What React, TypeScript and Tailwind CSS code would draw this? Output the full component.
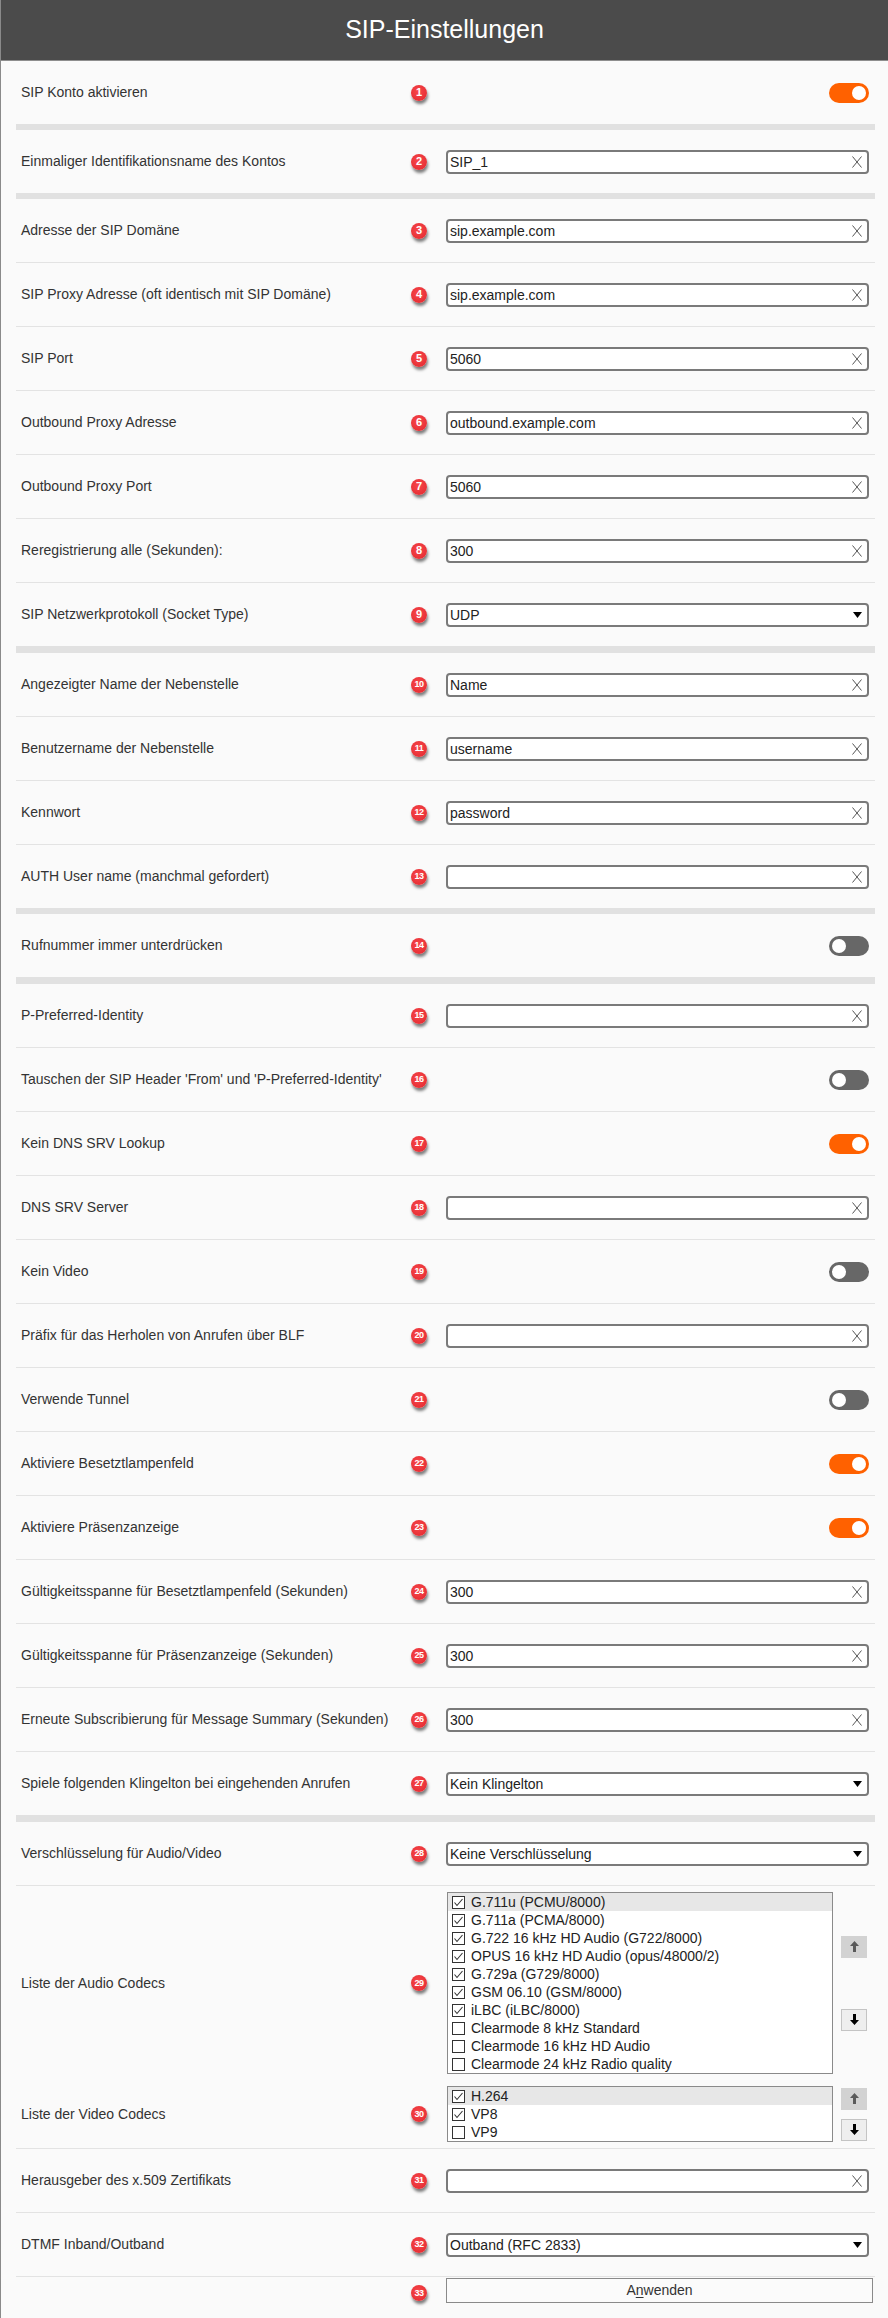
import React from "react";

type Kind = "toggle" | "input" | "select";
type SepKind = "thick" | "thick7" | "thin";
type Row = { n: number; label: string; kind: Kind; value?: string; on?: boolean; sep: SepKind };

const rows: Row[] = [
  { n: 1, label: "SIP Konto aktivieren", kind: "toggle", on: true, sep: "thick" },
  { n: 2, label: "Einmaliger Identifikationsname des Kontos", kind: "input", value: "SIP_1", sep: "thick" },
  { n: 3, label: "Adresse der SIP Domäne", kind: "input", value: "sip.example.com", sep: "thin" },
  { n: 4, label: "SIP Proxy Adresse (oft identisch mit SIP Domäne)", kind: "input", value: "sip.example.com", sep: "thin" },
  { n: 5, label: "SIP Port", kind: "input", value: "5060", sep: "thin" },
  { n: 6, label: "Outbound Proxy Adresse", kind: "input", value: "outbound.example.com", sep: "thin" },
  { n: 7, label: "Outbound Proxy Port", kind: "input", value: "5060", sep: "thin" },
  { n: 8, label: "Reregistrierung alle (Sekunden):", kind: "input", value: "300", sep: "thin" },
  { n: 9, label: "SIP Netzwerkprotokoll (Socket Type)", kind: "select", value: "UDP", sep: "thick7" },
  { n: 10, label: "Angezeigter Name der Nebenstelle", kind: "input", value: "Name", sep: "thin" },
  { n: 11, label: "Benutzername der Nebenstelle", kind: "input", value: "username", sep: "thin" },
  { n: 12, label: "Kennwort", kind: "input", value: "password", sep: "thin" },
  { n: 13, label: "AUTH User name (manchmal gefordert)", kind: "input", value: "", sep: "thick" },
  { n: 14, label: "Rufnummer immer unterdrücken", kind: "toggle", on: false, sep: "thick7" },
  { n: 15, label: "P-Preferred-Identity", kind: "input", value: "", sep: "thin" },
  { n: 16, label: "Tauschen der SIP Header 'From' und 'P-Preferred-Identity'", kind: "toggle", on: false, sep: "thin" },
  { n: 17, label: "Kein DNS SRV Lookup", kind: "toggle", on: true, sep: "thin" },
  { n: 18, label: "DNS SRV Server", kind: "input", value: "", sep: "thin" },
  { n: 19, label: "Kein Video", kind: "toggle", on: false, sep: "thin" },
  { n: 20, label: "Präfix für das Herholen von Anrufen über BLF", kind: "input", value: "", sep: "thin" },
  { n: 21, label: "Verwende Tunnel", kind: "toggle", on: false, sep: "thin" },
  { n: 22, label: "Aktiviere Besetztlampenfeld", kind: "toggle", on: true, sep: "thin" },
  { n: 23, label: "Aktiviere Präsenzanzeige", kind: "toggle", on: true, sep: "thin" },
  { n: 24, label: "Gültigkeitsspanne für Besetztlampenfeld (Sekunden)", kind: "input", value: "300", sep: "thin" },
  { n: 25, label: "Gültigkeitsspanne für Präsenzanzeige (Sekunden)", kind: "input", value: "300", sep: "thin" },
  { n: 26, label: "Erneute Subscribierung für Message Summary (Sekunden)", kind: "input", value: "300", sep: "thin" },
  { n: 27, label: "Spiele folgenden Klingelton bei eingehenden Anrufen", kind: "select", value: "Kein Klingelton", sep: "thick7" },
  { n: 28, label: "Verschlüsselung für Audio/Video", kind: "select", value: "Keine Verschlüsselung", sep: "thin" },
];

const audio: [string, boolean][] = [
  ["G.711u (PCMU/8000)", true],
  ["G.711a (PCMA/8000)", true],
  ["G.722 16 kHz HD Audio (G722/8000)", true],
  ["OPUS 16 kHz HD Audio (opus/48000/2)", true],
  ["G.729a (G729/8000)", true],
  ["GSM 06.10 (GSM/8000)", true],
  ["iLBC (iLBC/8000)", true],
  ["Clearmode 8 kHz Standard", false],
  ["Clearmode 16 kHz HD Audio", false],
  ["Clearmode 24 kHz Radio quality", false],
];
const video: [string, boolean][] = [
  ["H.264", true],
  ["VP8", true],
  ["VP9", false],
];

function Badge({ n }: { n: number }) {
  return (
    <span
      className={
        "relative z-10 flex h-[16px] w-[16px] shrink-0 items-center justify-center rounded-full bg-[radial-gradient(circle_at_45%_40%,#f8474b,#e0272d)] font-bold leading-none text-white shadow-[1px_3px_3px_rgba(0,0,0,0.5)] " +
        (n < 10 ? "text-[11px]" : "text-[9px] tracking-[-0.5px]")
      }
    >
      {n}
    </span>
  );
}

function Toggle({ on }: { on?: boolean }) {
  return (
    <div className="flex w-[423px] justify-end">
      {on ? (
        <div className="flex h-[20px] w-[40px] items-center justify-end rounded-full bg-[#ff6100] pr-[3px]">
          <div className="h-[14px] w-[14px] rounded-full bg-white" />
        </div>
      ) : (
        <div className="flex h-[20px] w-[40px] items-center justify-start rounded-full bg-[#676767] pl-[3px]">
          <div className="h-[14px] w-[14px] rounded-full bg-white" />
        </div>
      )}
    </div>
  );
}

function XIcon() {
  return (
    <svg width="10" height="12" viewBox="0 0 10 12" className="shrink-0">
      <path d="M0.5 0.5 L9.5 11.5 M9.5 0.5 L0.5 11.5" stroke="#555" strokeWidth="1" fill="none" />
    </svg>
  );
}

function Input({ value }: { value?: string }) {
  return (
    <div className="flex h-[24px] w-[423px] items-center justify-between rounded-[4px] border-2 border-[#7a7a7a] bg-white pl-[2px] pr-[5px]">
      <span className="text-[14px] leading-none text-[#222]">{value}</span>
      <XIcon />
    </div>
  );
}

function Select({ value }: { value?: string }) {
  return (
    <div className="flex h-[24px] w-[423px] items-center justify-between rounded-[4px] border-2 border-[#7a7a7a] bg-white pl-[2px] pr-[5px]">
      <span className="text-[14px] leading-none text-[#222]">{value}</span>
      <svg width="9" height="6" viewBox="0 0 9 6" className="shrink-0">
        <path d="M0 0 H9 L4.5 6Z" fill="#000" />
      </svg>
    </div>
  );
}

function Sep({ kind }: { kind: SepKind }) {
  if (kind === "thick") return <div className="ml-[15px] mr-[13px] h-[6px] bg-[#e1e1e1]" />;
  if (kind === "thick7") return <div className="ml-[15px] mr-[13px] h-[7px] bg-[#e1e1e1]" />;
  return <div className="ml-[15px] mr-[13px] h-[1px] bg-[#e3e3e3]" />;
}

function Label({ text }: { text: string }) {
  return (
    <div className="w-[410px] shrink-0 whitespace-nowrap pl-[20px] text-[14px] text-[#333]">{text}</div>
  );
}

function CheckBox({ checked }: { checked: boolean }) {
  return (
    <svg width="13" height="13" viewBox="0 0 13 13" className="shrink-0">
      <rect x="0.5" y="0.5" width="12" height="12" fill="#fff" stroke="#333" strokeWidth="1" />
      {checked && <path d="M2.5 6.5 L5 9.5 L10.5 3" stroke="#333" strokeWidth="1.1" fill="none" />}
    </svg>
  );
}

function Arrow({ up, disabled }: { up: boolean; disabled?: boolean }) {
  return (
    <div
      className={
        "flex h-[22px] w-[26px] items-center justify-center " +
        (disabled ? "bg-[#d2d2d2]" : "border border-[#c4c4c4] bg-[#eeeeee]")
      }
    >
      <svg width="9" height="11" viewBox="0 0 9 11" className={up ? "" : "rotate-180"}>
        <path d="M4.5 0 L9 5 H6 V11 H3 V5 H0Z" fill={disabled ? "#5a5a5a" : "#000"} />
      </svg>
    </div>
  );
}

function CodecList({ items, gap }: { items: [string, boolean][]; gap: string }) {
  return (
    <div className="ml-[1px] flex items-center gap-[8px]">
      <div className="w-[386px] border border-[#8a8a8a] bg-white">
        {items.map(([name, checked], i) => (
          <div
            key={name}
            className={"flex h-[18px] items-center gap-[6px] pl-[4px] " + (i === 0 ? "bg-[#e7e7e7]" : "")}
          >
            <CheckBox checked={checked} />
            <span className="text-[14px] leading-none text-[#222]">{name}</span>
          </div>
        ))}
      </div>
      <div className={"flex flex-col " + gap}>
        <Arrow up disabled />
        <Arrow up={false} />
      </div>
    </div>
  );
}

export default function App() {
  return (
    <div className="min-h-[2318px] w-[888px] border-l border-[#8a8a8a] bg-[#fafafa] font-['Liberation_Sans',Arial,sans-serif]">
      <div className="flex h-[61px] items-center justify-center border-b border-[#8e8e8e] bg-[#4b4b4b] pb-[1px]">
        <h1 className="text-[25px] font-normal text-white">SIP-Einstellungen</h1>
      </div>
      {rows.map((r) => (
        <React.Fragment key={r.n}>
          <div className="flex h-[63px] items-center">
            <Label text={r.label} />
            <Badge n={r.n} />
            <div className="ml-[19px]">
              {r.kind === "toggle" && <Toggle on={r.on} />}
              {r.kind === "input" && <Input value={r.value} />}
              {r.kind === "select" && <Select value={r.value} />}
            </div>
          </div>
          <Sep kind={r.sep} />
        </React.Fragment>
      ))}
      <div className="flex flex-col gap-[12px] pb-[6px] pt-[6px]">
        <div className="flex items-center">
          <Label text="Liste der Audio Codecs" />
          <Badge n={29} />
          <div className="ml-[19px]">
            <CodecList items={audio} gap="gap-[51px]" />
          </div>
        </div>
        <div className="flex items-center">
          <Label text="Liste der Video Codecs" />
          <Badge n={30} />
          <div className="ml-[19px]">
            <CodecList items={video} gap="gap-[9px]" />
          </div>
        </div>
      </div>
      <Sep kind="thin" />
      <div className="flex h-[63px] items-center">
        <Label text="Herausgeber des x.509 Zertifikats" />
        <Badge n={31} />
        <div className="ml-[19px]">
          <Input value="" />
        </div>
      </div>
      <Sep kind="thin" />
      <div className="flex h-[63px] items-center">
        <Label text="DTMF Inband/Outband" />
        <Badge n={32} />
        <div className="ml-[19px]">
          <Select value="Outband (RFC 2833)" />
        </div>
      </div>
      <Sep kind="thin" />
      <div className="flex h-[40px] items-start">
        <div className="w-[410px] shrink-0" />
        <div className="mt-[8px]">
          <Badge n={33} />
        </div>
        <div className="ml-[19px] mt-[1px] flex h-[25px] w-[427px] items-center justify-center border border-[#8a8a8a] bg-[#fbfbfb] text-[14px] text-[#333]">
          <span>
            A<span className="underline underline-offset-2">n</span>wenden
          </span>
        </div>
      </div>
    </div>
  );
}
